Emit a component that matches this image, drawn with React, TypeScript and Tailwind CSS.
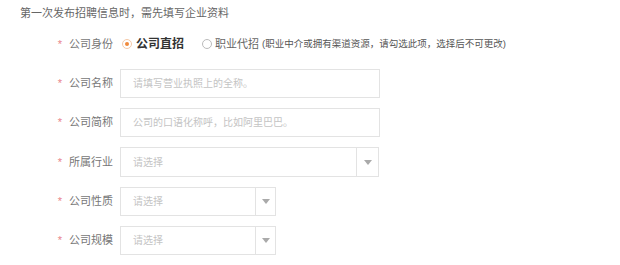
import { useState } from 'react'

const font = { fontFamily: '"Liberation Sans", "Noto Sans CJK SC", sans-serif' }

function Label({ text }: { text: string }) {
  return (
    <div className="flex w-[113px] shrink-0 items-center justify-end">
      <span className="mr-[7px] text-[11px] leading-none text-[#e8838a]">*</span>
      <span className="text-[11px] leading-none text-[#777]">{text}</span>
    </div>
  )
}

function Arrow() {
  return (
    <svg width="8" height="5" viewBox="0 0 8 5" className="fill-[#aaa]">
      <path d="M0 0h8L4 5z" />
    </svg>
  )
}

function Select({ wide }: { wide?: boolean }) {
  return (
    <div
      className={
        wide
          ? 'ml-[7px] flex h-[30px] w-[259px] border border-[#e3e3e3]'
          : 'ml-[7px] flex h-[29px] w-[156px] border border-[#e3e3e3]'
      }
    >
      <div className="flex flex-1 items-center pl-[12px] text-[10px] text-[#c4c4c4]">
        请选择
      </div>
      <div
        className={
          wide
            ? 'flex w-[22px] items-center justify-center border-l border-[#e3e3e3]'
            : 'flex w-[20px] items-center justify-center border-l border-[#e3e3e3]'
        }
      >
        <Arrow />
      </div>
    </div>
  )
}

export default function App() {
  const [type, setType] = useState('direct')

  return (
    <div className="h-[265px] w-[620px] bg-white pt-[6px]" style={font}>
      <p className="pl-[20px] text-[11px] leading-[14px] text-[#666]">
        第一次发布招聘信息时，需先填写企业资料
      </p>

      <div className="mt-[14px] flex h-[20px] items-center">
        <Label text="公司身份" />
        <label
          className="ml-[9px] flex cursor-pointer items-center"
          onClick={() => setType('direct')}
        >
          <span className="flex size-[10px] items-center justify-center rounded-full border border-[#f5c9a8]">
            {type === 'direct' && (
              <span className="size-[4px] rounded-full bg-[#f08a3c]" />
            )}
          </span>
          <span
            className={
              type === 'direct'
                ? 'ml-[4px] text-[12px] font-bold text-[#333]'
                : 'ml-[4px] text-[12px] text-[#666]'
            }
          >
            公司直招
          </span>
        </label>
        <label
          className="ml-[18px] flex cursor-pointer items-center"
          onClick={() => setType('agent')}
        >
          <span className="flex size-[10px] items-center justify-center rounded-full border border-[#bbb]">
            {type === 'agent' && (
              <span className="size-[4px] rounded-full bg-[#f08a3c]" />
            )}
          </span>
          <span
            className={
              type === 'agent'
                ? 'ml-[3px] text-[11px] font-bold text-[#333]'
                : 'ml-[3px] text-[11px] text-[#666]'
            }
          >
            职业代招
          </span>
        </label>
        <span className="ml-[3px] text-[9.5px] text-[#555]">
          (职业中介或拥有渠道资源，请勾选此项，选择后不可更改)
        </span>
      </div>

      <div className="mt-[15px] flex flex-col gap-[10px]">
        <div className="flex items-center">
          <Label text="公司名称" />
          <input
            className="ml-[7px] h-[29px] w-[260px] border border-[#e3e3e3] pl-[12px] text-[10px] outline-none placeholder:text-[#c4c4c4]"
            placeholder="请填写营业执照上的全称。"
          />
        </div>
        <div className="flex items-center">
          <Label text="公司简称" />
          <input
            className="ml-[7px] h-[29px] w-[260px] border border-[#e3e3e3] pl-[12px] text-[10px] outline-none placeholder:text-[#c4c4c4]"
            placeholder="公司的口语化称呼，比如阿里巴巴。"
          />
        </div>
        <div className="flex items-center">
          <Label text="所属行业" />
          <Select wide />
        </div>
        <div className="flex items-center">
          <Label text="公司性质" />
          <Select />
        </div>
        <div className="flex items-center">
          <Label text="公司规模" />
          <Select />
        </div>
      </div>
    </div>
  )
}
